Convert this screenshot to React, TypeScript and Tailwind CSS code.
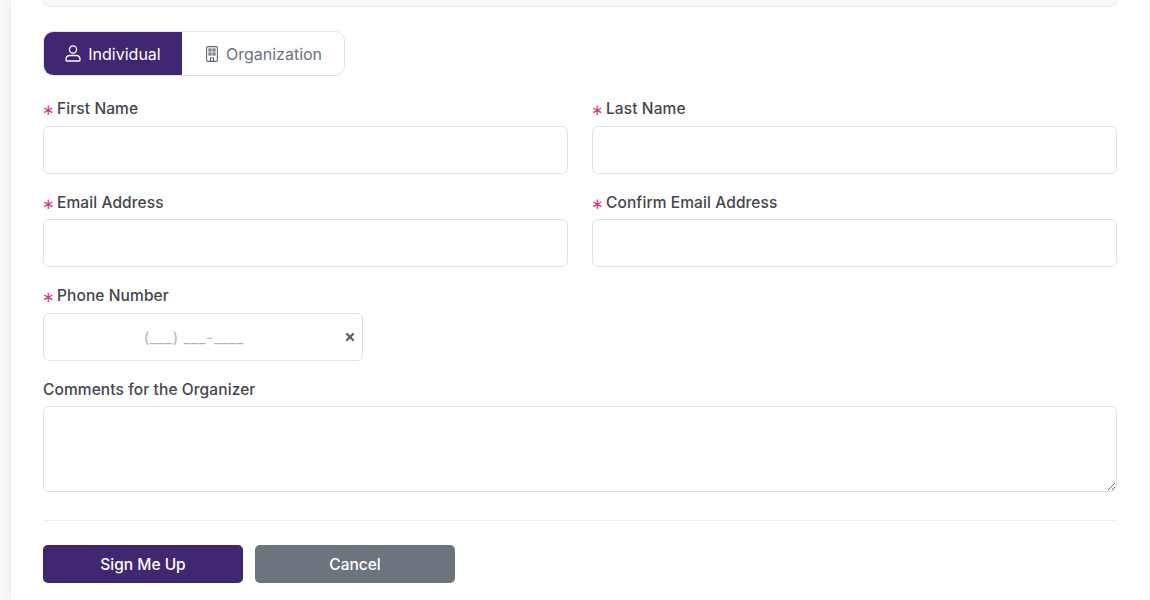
import { X } from 'lucide-react'

function Label({ text, required = true, raise = false }: { text: string; required?: boolean; raise?: boolean }) {
  return (
    <div
      className={
        raise
          ? 'flex h-[21px] items-center pb-[2px] text-[15.5px] font-[450] tracking-[0.1px] text-[#45454d]'
          : 'flex h-[21px] items-center text-[15.5px] font-[450] tracking-[0.1px] text-[#45454d]'
      }
    >
      {required && (
        <span className="mr-[4px] -ml-[1px] mt-[3px] w-[11px] font-['DejaVu_Sans',sans-serif] text-[15px] leading-none tracking-normal text-[#d9387f]">
          ∗
        </span>
      )}
      {text}
    </div>
  )
}

function Field({ label, raise }: { label: string; raise?: boolean }) {
  return (
    <div className="flex flex-col gap-[6px]">
      <Label text={label} raise={raise} />
      <input className="h-[48px] w-full rounded-[6px] border border-[#dee2e6] bg-white" />
    </div>
  )
}

function PersonIcon() {
  return (
    <svg viewBox="0 0 16 17" fill="none" stroke="currentColor" strokeWidth="1.3" className="h-[17px] w-[16px]">
      <circle cx="8" cy="4.5" r="3.6" />
      <path d="M4.5 10.5h7a3.5 3.5 0 0 1 3.5 3.5v1.2a.8.8 0 0 1-.8.8H1.8a.8.8 0 0 1-.8-.8V14a3.5 3.5 0 0 1 3.5-3.5z" />
    </svg>
  )
}

function BuildingIcon() {
  return (
    <svg viewBox="0 0 12 16" fill="none" stroke="currentColor" strokeWidth="1.1" className="h-[16px] w-[12px] text-[#5b6478]">
      <rect x="0.6" y="0.6" width="10.8" height="14.8" rx="1.2" />
      <rect x="3" y="3" width="2" height="2" />
      <rect x="7" y="3" width="2" height="2" />
      <rect x="3" y="7" width="2" height="2" />
      <rect x="7" y="7" width="2" height="2" />
      <path d="M4.5 15.4V12h3v3.4" />
    </svg>
  )
}

export default function App() {
  return (
    <div className="h-[600px] overflow-hidden bg-[#f8f8f8] pl-[11px] font-['Inter',sans-serif]">
      <div className="h-full w-[1138px] bg-white pl-[32px] pr-[32px] shadow-[0_0_8px_rgba(0,0,0,0.08)]">
        <div className="h-[7px] w-[1074px] rounded-b-[12px] border border-t-0 border-[#e9ecef] bg-[#f8f9fa]" />

        <div className="mt-[24px] flex h-[45px] w-[302px] overflow-hidden rounded-[10px] border border-[#dee2e6] text-[16px] leading-[45px]">
          <div className="flex w-[138px] items-center justify-center gap-[7px] bg-[#412771] text-white">
            <PersonIcon />
            <span className="mt-[1px]">Individual</span>
          </div>
          <div className="flex flex-1 items-center justify-center gap-[8px] pl-[2px] text-[#6b7280]">
            <BuildingIcon />
            <span className="mt-[1px]">Organization</span>
          </div>
        </div>

        <div className="mt-[23px] grid w-[1074px] grid-cols-2 gap-x-[24px] gap-y-[18px]">
          <Field label="First Name" raise />
          <Field label="Last Name" raise />
          <Field label="Email Address" />
          <Field label="Confirm Email Address" />
        </div>

        <div className="mt-[19px] flex flex-col gap-[6px]">
          <Label text="Phone Number" raise />
          <div className="relative flex h-[48px] w-[320px] items-center rounded-[6px] border border-[#dee2e6] bg-white">
            <span className="mt-[2px] w-[300px] text-center text-[15px] tracking-[0.7px] text-[#a9b4c2]">(___) ___-____</span>
            <X className="absolute right-[6px] top-[17px] h-[12px] w-[12px] text-[#56626b]" strokeWidth={4.5} />
          </div>
        </div>

        <div className="mt-[18px] flex w-[1074px] flex-col gap-[6px]">
          <Label text="Comments for the Organizer" required={false} />
          <textarea className="block h-[86px] w-full rounded-[6px] border border-[#dee2e6] bg-white" />
        </div>

        <div className="mt-[28px] w-[1074px] border-t border-[#eceef0]" />

        <div className="mt-[24px] flex gap-[12px] text-[15.5px] font-[450] text-white">
          <button className="h-[38px] w-[200px] rounded-[5px] bg-[#412771] pt-[2px]">Sign Me Up</button>
          <button className="h-[38px] w-[200px] rounded-[5px] bg-[#6c757d] pt-[2px]">Cancel</button>
        </div>
      </div>
    </div>
  )
}
